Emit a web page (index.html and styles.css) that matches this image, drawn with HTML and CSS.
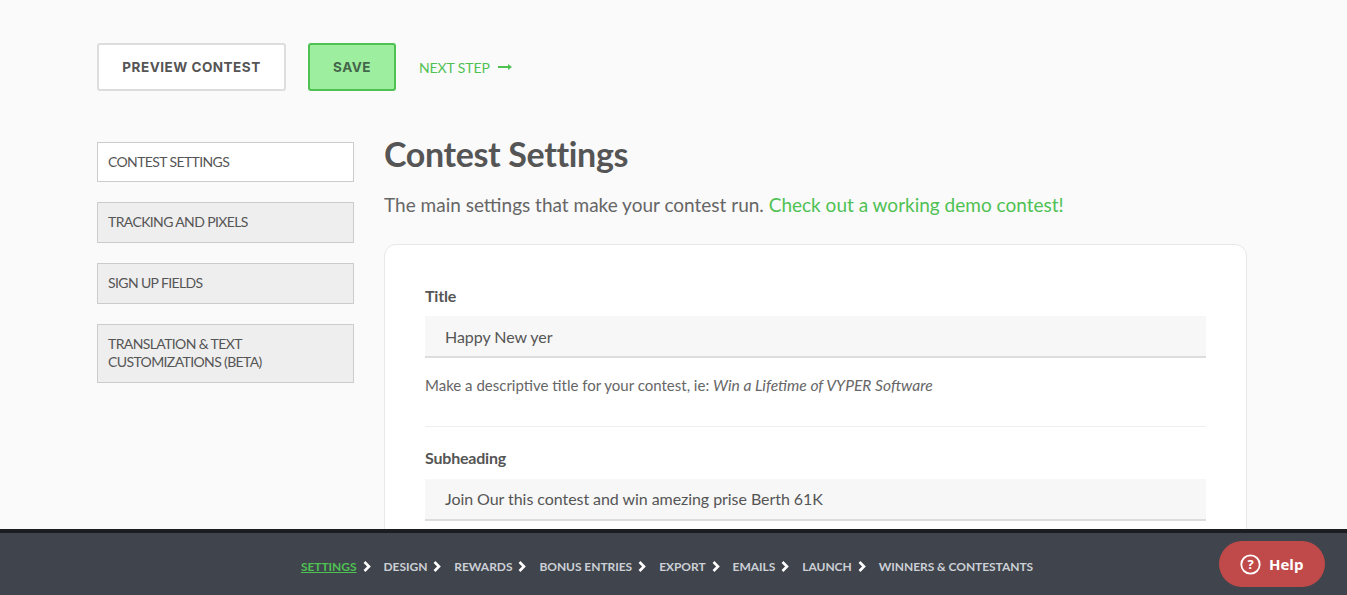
FILE: index.html
```html
<!DOCTYPE html>
<html lang="en">
<head>
<meta charset="utf-8">
<title>Contest Settings</title>
<link rel="stylesheet" href="styles.css">
</head>
<body>
<div class="page">
  <div class="actions">
    <button class="btn btn-preview">PREVIEW CONTEST</button>
    <button class="btn btn-save">SAVE</button>
    <a class="next" href="#">NEXT STEP
      <svg class="next-arrow" width="14" height="8" viewBox="0 0 14 8"><path d="M0 4H12" stroke="#4fc153" stroke-width="2"/><path d="M10 1L14 4L10 7Z" fill="#4fc153"/></svg>
    </a>
  </div>
  <div class="columns">
    <nav class="side">
      <a class="side-item active" href="#">CONTEST SETTINGS</a>
      <a class="side-item" href="#">TRACKING AND PIXELS</a>
      <a class="side-item" href="#">SIGN UP FIELDS</a>
      <a class="side-item side-item-tall" href="#">TRANSLATION &amp; TEXT CUSTOMIZATIONS (BETA)</a>
    </nav>
    <main class="main">
      <h1 class="title">Contest Settings</h1>
      <p class="lead">The main settings that make your contest run. <a href="#">Check out a working demo contest!</a></p>
      <section class="card">
        <div class="field">
          <label class="label">Title</label>
          <div class="input">Happy New yer</div>
          <p class="hint">Make a descriptive title for your contest, ie: <em>Win a Lifetime of VYPER Software</em></p>
        </div>
        <div class="field field-second">
          <label class="label">Subheading</label>
          <div class="input">Join Our this contest and win amezing prise Berth 61K</div>
        </div>
      </section>
    </main>
  </div>
</div>
<footer class="bar">
  <div class="steps">
    <a class="step current" href="#">SETTINGS</a><svg class="chev" width="8" height="11" viewBox="0 0 8 11"><path d="M1.5 1L6 5.5L1.5 10" fill="none" stroke="#fff" stroke-width="2.6"/></svg>
    <a class="step" href="#">DESIGN</a><svg class="chev" width="8" height="11" viewBox="0 0 8 11"><path d="M1.5 1L6 5.5L1.5 10" fill="none" stroke="#fff" stroke-width="2.6"/></svg>
    <a class="step" href="#">REWARDS</a><svg class="chev" width="8" height="11" viewBox="0 0 8 11"><path d="M1.5 1L6 5.5L1.5 10" fill="none" stroke="#fff" stroke-width="2.6"/></svg>
    <a class="step" href="#">BONUS ENTRIES</a><svg class="chev" width="8" height="11" viewBox="0 0 8 11"><path d="M1.5 1L6 5.5L1.5 10" fill="none" stroke="#fff" stroke-width="2.6"/></svg>
    <a class="step" href="#">EXPORT</a><svg class="chev" width="8" height="11" viewBox="0 0 8 11"><path d="M1.5 1L6 5.5L1.5 10" fill="none" stroke="#fff" stroke-width="2.6"/></svg>
    <a class="step" href="#">EMAILS</a><svg class="chev" width="8" height="11" viewBox="0 0 8 11"><path d="M1.5 1L6 5.5L1.5 10" fill="none" stroke="#fff" stroke-width="2.6"/></svg>
    <a class="step" href="#">LAUNCH</a><svg class="chev" width="8" height="11" viewBox="0 0 8 11"><path d="M1.5 1L6 5.5L1.5 10" fill="none" stroke="#fff" stroke-width="2.6"/></svg>
    <a class="step" href="#">WINNERS &amp; CONTESTANTS</a>
  </div>
  <button class="help">
    <svg width="21" height="21" viewBox="0 0 21 21"><circle cx="10.5" cy="10.5" r="9.2" fill="none" stroke="#fff" stroke-width="1.8"/><text x="10.5" y="15.2" text-anchor="middle" class="help-q">?</text></svg>
    <span>Help</span>
  </button>
</footer>
</body>
</html>
```
FILE: styles.css
```css
* { box-sizing: border-box; }
html, body { margin: 0; height: 595px; overflow: hidden; }
body { background: #fafafa; color: #555; font-family: Lato, "Liberation Sans", sans-serif; }
a { text-decoration: none; }
.page { height: 595px; overflow: hidden; padding: 43px 100px 0 97px; }
.actions { display: flex; align-items: center; }
.btn { height: 48px; border-radius: 3px; font-family: Inter, "Liberation Sans", sans-serif; font-size: 13.5px; font-weight: 700; letter-spacing: 0.5px; color: #555; cursor: pointer; }
.btn-preview { width: 189px; background: #fff; border: 2px solid #ddd; }
.btn-save { width: 88px; margin-left: 22px; background: #9eee9f; border: 2px solid #4fc153; color: #44664a; }
.next { margin-left: 23px; display: flex; align-items: center; gap: 8px; font-size: 14px; letter-spacing: -0.1px; color: #4fc153; }
.columns { display: flex; margin-top: 51px; gap: 30px; }
.side { width: 257px; flex: none; display: flex; flex-direction: column; gap: 20px; }
.side-item { display: block; padding: 10px; min-height: 41px; border: 1px solid #ccc; background: #eee; font-size: 14px; line-height: 18px; color: #555; letter-spacing: -0.62px; }
.side-item.active { background: #fff; min-height: 40px; }
.side-item-tall { min-height: 59px; }
.main { flex: 1; }
.title { margin: -9px 0 0; font-size: 34px; line-height: 41px; letter-spacing: -0.35px; font-weight: 700; color: #555; }
.lead { margin: 19px 0 0; font-size: 19px; line-height: 24px; color: #666; }
.lead a { color: #4fc153; }
.card { margin-top: 27px; padding: 39px 40px; height: 400px; background: #fff; border: 1px solid #e8e8e8; border-radius: 12px; }
.label { display: block; font-size: 16px; line-height: 24px; letter-spacing: -0.2px; font-weight: 700; color: #555; }
.field { padding-bottom: 30px; }
.field-second { padding-top: 19px; border-top: 1px solid #eee; }
.input { height: 42px; margin-top: 8px; padding: 0 20px; background: #f7f7f7; border-bottom: 2px solid #ddd; font-size: 16px; line-height: 41px; letter-spacing: -0.06px; color: #555; }
.field-second .input { margin-top: 9px; line-height: 40px; }
.hint { margin: 16px 0 0; font-size: 15px; line-height: 22px; color: #666; }
.hint em { font-size: 15.6px; }
.bar { position: fixed; left: 0; right: 0; bottom: 0; height: 66px; background: #40444c; border-top: 4px solid #1c1d21; }
.steps { display: flex; align-items: center; justify-content: center; height: 100%; padding: 4px 13px 0 0; font-size: 12px; letter-spacing: -0.05px; font-weight: 700; }
.step { color: #ccd0d6; }
.step.current { color: #4fc153; text-decoration: underline; }
.chev { margin: 0 13px 0 6px; flex: none; }
.help { position: absolute; left: 1219px; top: 8px; width: 106px; height: 46px; display: flex; align-items: center; gap: 8px; padding: 0 0 0 21px; background: #c04a4a; border: 0; border-radius: 23px; color: #fff; font-family: "Open Sans", sans-serif; font-size: 15px; font-weight: 700; }
.help-q { font-family: "Open Sans", sans-serif; font-size: 13px; font-weight: 700; fill: #fff; }
```
